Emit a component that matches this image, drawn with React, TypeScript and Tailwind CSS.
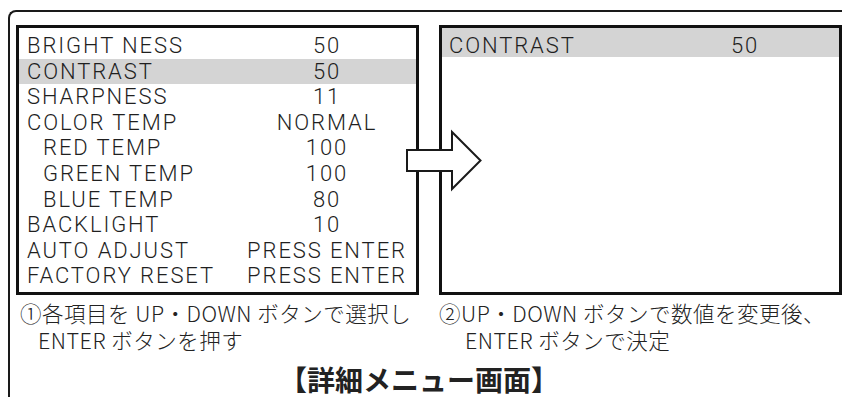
import React from 'react'

type Row = { label: string; value: string; indent?: boolean; active?: boolean }

const rows: Row[] = [
    { label: 'BRIGHT NESS', value: '50' },
    { label: 'CONTRAST', value: '50', active: true },
    { label: 'SHARPNESS', value: '11' },
    { label: 'COLOR TEMP', value: 'NORMAL' },
    { label: 'RED TEMP', value: '100', indent: true },
    { label: 'GREEN TEMP', value: '100', indent: true },
    { label: 'BLUE TEMP', value: '80', indent: true },
    { label: 'BACKLIGHT', value: '10' },
    { label: 'AUTO ADJUST', value: 'PRESS ENTER' },
    { label: 'FACTORY RESET', value: 'PRESS ENTER' },
]

const osd = "font-['Roboto','Liberation_Sans',sans-serif] font-light text-[22px] tracking-[1.9px] text-[#1f1f1f]"
const jp = "font-['Noto_Sans_CJK_JP','Noto_Sans',sans-serif] text-[#222]"

const App = () => {
    return (
        <div className="w-[842px] h-[397px] bg-white overflow-hidden relative">
            <div className="ml-[8px] mt-[10px] h-[387px] border-t-2 border-l-2 border-[#1a1a1a] rounded-tl-[8px] pl-[6px] pt-[13px]">

                {/* menu panels */}
                <div className="flex gap-[20px]">
                    <div className={`w-[403px] h-[270px] border-[3px] border-[#111] pt-[5px] ${osd}`}>
                        {rows.map((r) => (
                            <div
                                key={r.label}
                                className={`flex h-[25.6px] leading-[25.6px] whitespace-nowrap ${r.active ? 'bg-[#d4d4d4]' : ''}`}
                            >
                                <div className={`flex-1 ${r.indent ? 'pl-[24px]' : 'pl-[8px]'}`}>{r.label}</div>
                                <div className="w-[160px] mr-[9px] text-center">{r.value}</div>
                            </div>
                        ))}
                    </div>

                    <div className={`w-[403px] h-[270px] border-[3px] border-[#111] ${osd}`}>
                        <div className="flex h-[29px] leading-[29px] pt-[3px] bg-[#d4d4d4] whitespace-nowrap">
                            <div className="flex-1 pl-[7px]">CONTRAST</div>
                            <div className="w-[160px] mr-[14px] text-center">50</div>
                        </div>
                    </div>
                </div>

                {/* captions */}
                <div className={`flex gap-[20px] mt-[5px] text-[21.5px] leading-[26.5px] tracking-[0.5px] font-light ${jp}`}>
                    <div className="w-[403px] pl-[4px] whitespace-nowrap">
                        <div>①各項目を UP・DOWN ボタンで選択し</div>
                        <div className="pl-[18px]">ENTER ボタンを押す</div>
                    </div>
                    <div className="w-[403px] whitespace-nowrap">
                        <div>②UP・DOWN ボタンで数値を変更後、</div>
                        <div className="pl-[26px]">ENTER ボタンで決定</div>
                    </div>
                </div>

                <div className={`mt-[12px] pr-[20px] text-center text-[28px] leading-[28px] font-bold ${jp}`}>
                    【詳細メニュー画面】
                </div>
            </div>

            {/* arrow between panels */}
            <svg className="absolute left-0 top-0" width="842" height="397" viewBox="0 0 842 397">
                <path
                    d="M407 150 H452 V132 L480.5 160.5 L452 189 V171 H407 Z"
                    fill="#fff"
                    stroke="#1a1a1a"
                    strokeWidth="2"
                    strokeLinejoin="miter"
                />
            </svg>
        </div>
    )
}

export default App
